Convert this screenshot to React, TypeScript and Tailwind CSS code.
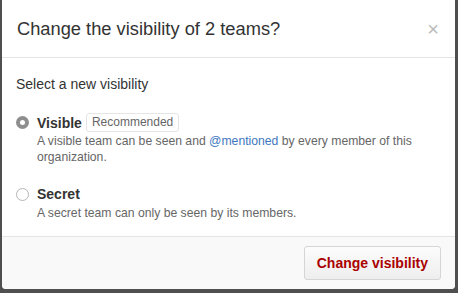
export default function App() {
  return (
    <div className="h-[293px] w-[458px] overflow-hidden bg-[#4f4f4f] pl-[2px] pr-[3px] pb-[4px] font-['Liberation_Sans',Arial,sans-serif]">
      <div className="flex h-full flex-col overflow-hidden rounded-b-[4px] bg-white">
        <div className="flex h-[58px] shrink-0 items-center justify-between border-b border-[#e5e5e5] pl-[15px] pr-[16px]">
          <h2 className="text-[18.3px] text-[#333]">Change the visibility of 2 teams?</h2>
          <span className="text-[20px] leading-none text-[#bbb]">×</span>
        </div>

        <div className="flex-1 px-[14px] pt-[16px]">
          <p className="text-[14px] leading-[20px] text-[#333]">Select a new visibility</p>

          <div className="mt-[18px] flex gap-[8px]">
            <span className="mt-[4px] flex h-[13px] w-[13px] shrink-0 items-center justify-center rounded-full bg-[#8e8e8e]">
              <span className="h-[5px] w-[5px] rounded-full bg-white" />
            </span>
            <div>
              <div className="flex h-[21px] items-center gap-[4px]">
                <span className="text-[14px] font-bold leading-[20px] text-[#333]">Visible</span>
                <span className="rounded-[3px] border border-[#e5e5e5] px-[5px] text-[12px] leading-[17px] text-[#666]">
                  Recommended
                </span>
              </div>
              <p className="text-[12.2px] leading-[16px] text-[#666]">
                A visible team can be seen and <span className="text-[#4078c0]">@mentioned</span> by every member of this
                organization.
              </p>
            </div>
          </div>

          <div className="mt-[19px] flex gap-[8px]">
            <span className="mt-[4px] h-[13px] w-[13px] shrink-0 rounded-full border border-[#b5b5b5] bg-white" />
            <div>
              <div className="text-[14px] font-bold leading-[21px] text-[#333]">Secret</div>
              <p className="text-[12.2px] leading-[16px] text-[#666]">A secret team can only be seen by its members.</p>
            </div>
          </div>
        </div>

        <div className="flex h-[53px] shrink-0 items-center justify-end border-t border-[#e5e5e5] bg-[#f9f9f9] px-[14px]">
          <button className="h-[34px] rounded-[3px] border border-[#d5d5d5] bg-gradient-to-b from-[#fcfcfc] to-[#eee] px-[12px] text-[14px] font-bold text-[#a00]">
            Change visibility
          </button>
        </div>
      </div>
    </div>
  );
}
